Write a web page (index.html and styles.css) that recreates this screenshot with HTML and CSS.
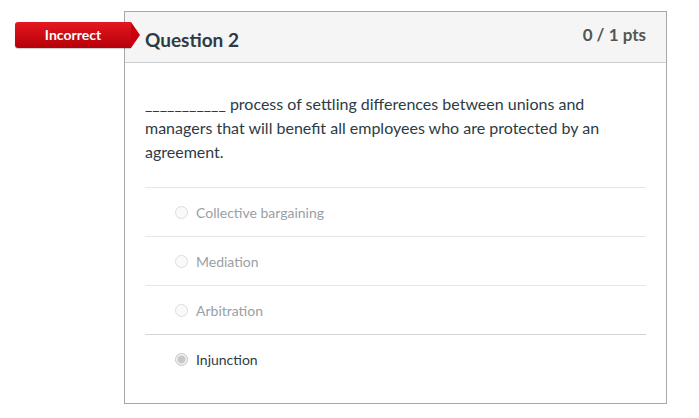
FILE: index.html
```html
<!DOCTYPE html>
<html lang="en">
<head>
  <meta charset="UTF-8" />
  <title>Question 2</title>
  <link rel="stylesheet" href="styles.css">
</head>
<body>
  <div class="page">
    <div class="question">
      <span class="badge">Incorrect</span>
      <div class="q-header">
        <h2>Question 2</h2>
        <span class="pts">0 / 1 pts</span>
      </div>
      <div class="q-body">
        <p class="q-text">___________ process of settling differences between unions and managers that will benefit all employees who are protected by an agreement.</p>
        <div class="answers">
          <div class="answer"><span class="radio"></span>Collective bargaining</div>
          <div class="answer"><span class="radio"></span>Mediation</div>
          <div class="answer"><span class="radio"></span>Arbitration</div>
          <div class="answer selected"><span class="radio"></span>Injunction</div>
        </div>
      </div>
    </div>
  </div>
</body>
</html>
```

FILE: styles.css
```css
* {
  margin: 0;
  padding: 0;
  box-sizing: border-box;
}
body {
  font-family: Lato, 'Liberation Sans', sans-serif;
  color: #2d3b45;
  background: #fff;
}
.page {
  padding: 11px 0 0 124px;
}

/* question card */
.question {
  position: relative;
  width: 543px;
  border: 1px solid #a8a8a8;
}
.badge {
  position: absolute;
  left: -110px;
  top: 10px;
  width: 116px;
  height: 26px;
  line-height: 25px;
  text-align: center;
  font-size: 14px;
  font-weight: bold;
  color: #fff;
  background: linear-gradient(#e41720, #b5000a);
  border-radius: 3px 0 0 3px;
  box-shadow: 0 1px 1px rgba(0,0,0,0.2);
}
.badge::after {
  content: "";
  position: absolute;
  right: -9px;
  top: 0;
  border-top: 13px solid transparent;
  border-bottom: 13px solid transparent;
  border-left: 9px solid #cb000e;
}
.q-header {
  display: flex;
  justify-content: space-between;
  align-items: flex-start;
  height: 51px;
  padding: 0 20px;
  background: #f5f5f5;
  border-bottom: 1px solid #c7cdd1;
}
.q-header h2 {
  font-size: 19px;
  font-weight: bold;
  margin-top: 16px;
  color: #2d3b45;
}
.pts {
  font-size: 17px;
  font-weight: bold;
  color: #555;
  margin-top: 12px;
}
.q-body {
  padding: 29px 20px 20px;
}
.q-text {
  font-size: 16px;
  line-height: 24px;
  color: #2d3b45;
  margin-bottom: 23px;
}
.answer {
  display: flex;
  align-items: center;
  height: 49px;
  padding-left: 30px;
  font-size: 14px;
  color: #9aa0a4;
  border-top: 1px solid #e6e6e6;
}
.answer:nth-child(4) {
  border-top-color: #d4d4d4;
}
.radio {
  width: 13px;
  height: 13px;
  border-radius: 50%;
  border: 1px solid #dcdcdc;
  background: #fafafa;
  margin-right: 8px;
}
.answer.selected {
  color: #2d3b45;
}
.answer.selected .radio {
  border-color: #c4c4c4;
  background: radial-gradient(circle, #c8c8c8 0 3.5px, #f2f2f2 4.5px);
}
```
